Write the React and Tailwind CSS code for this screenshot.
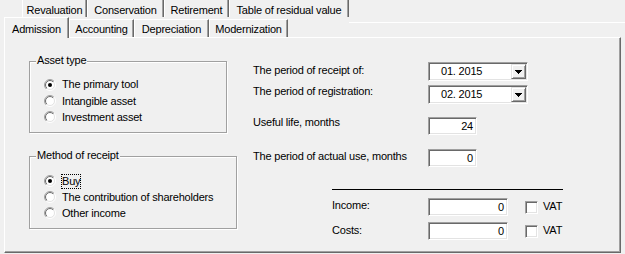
import React from "react";

const sunken =
  "border border-t-[#a0a0a0] border-l-[#a0a0a0] border-b-white border-r-white shadow-[inset_1px_1px_0_#696969,inset_-1px_-1px_0_#e3e3e3] bg-white";

function Radio({ checked }) {
  return (
    <svg width="12" height="12" viewBox="0 0 12 12" className="shrink-0">
      <defs>
        <linearGradient id="rgo" x1="0" y1="0" x2="1" y2="1">
          <stop offset="0.5" stopColor="#a0a0a0" />
          <stop offset="0.5" stopColor="#ffffff" />
        </linearGradient>
        <linearGradient id="rgi" x1="0" y1="0" x2="1" y2="1">
          <stop offset="0.5" stopColor="#696969" />
          <stop offset="0.5" stopColor="#e3e3e3" />
        </linearGradient>
      </defs>
      <circle cx="6" cy="6" r="5.5" fill="none" stroke="url(#rgo)" strokeWidth="1" />
      <circle cx="6" cy="6" r="4.5" fill="#ffffff" stroke="url(#rgi)" strokeWidth="1" />
      {checked && <circle cx="6" cy="6" r="2" fill="#000000" />}
    </svg>
  );
}

function RadioRow({ checked, focus, h, children }) {
  return (
    <div className={`flex items-center ${h}`}>
      <Radio checked={checked} />
      <span
        className={`ml-[5px] border ${
          focus ? "border-dotted border-black" : "border-transparent"
        }`}
      >
        {children}
      </span>
    </div>
  );
}

function Tab1({ w, children }) {
  return (
    <div
      className={`${w} h-[17px] shrink-0 border-l border-r border-l-white border-r-[#696969] shadow-[inset_-1px_0_0_#a0a0a0] text-center pt-[4px] whitespace-nowrap`}
    >
      {children}
    </div>
  );
}

function Tab2({ w, active, children }) {
  if (active) {
    return (
      <div
        className={`${w} h-[21px] shrink-0 relative z-10 bg-[#f0f0f0] border-t border-l border-r border-t-white border-l-white border-r-[#696969] shadow-[inset_-1px_0_0_#a0a0a0] text-center pt-[5px] whitespace-nowrap`}
      >
        {children}
      </div>
    );
  }
  return (
    <div
      className={`${w} h-[18px] mt-[2px] shrink-0 border-t border-l border-r border-t-white border-l-white border-r-[#696969] shadow-[inset_-1px_0_0_#a0a0a0] text-center pt-[3px] whitespace-nowrap`}
    >
      {children}
    </div>
  );
}

function Combo({ value }) {
  return (
    <div className={`w-[100px] h-[19px] ${sunken} flex items-stretch p-[1px]`}>
      <span className="flex-1 pl-[11px] flex items-center">{value}</span>
      <div className="w-[15px] bg-[#f0f0f0] border border-t-[#e3e3e3] border-l-[#e3e3e3] border-b-[#696969] border-r-[#696969] shadow-[inset_1px_1px_0_#ffffff,inset_-1px_-1px_0_#a0a0a0] flex items-center justify-center">
        <svg width="7" height="4" viewBox="0 0 7 4" shapeRendering="crispEdges">
          <rect x="0" y="0" width="7" height="1" fill="#000" />
          <rect x="1" y="1" width="5" height="1" fill="#000" />
          <rect x="2" y="2" width="3" height="1" fill="#000" />
          <rect x="3" y="3" width="1" height="1" fill="#000" />
        </svg>
      </div>
    </div>
  );
}

function Input({ w, value }) {
  return (
    <div className={`${w} h-[18px] shrink-0 ${sunken} flex items-center justify-end pr-[3px]`}>
      {value}
    </div>
  );
}

function Check() {
  return <div className={`w-[13px] h-[13px] shrink-0 ${sunken}`} />;
}

export default function App() {
  return (
    <div className="w-[625px] h-[254px] bg-[#f0f0f0] overflow-hidden text-black text-[11px] leading-[13px] tracking-[-0.2px] font-['Liberation_Sans',Arial,sans-serif]">
      {/* back tab row */}
      <div className="flex h-[17px] pl-[22px]">
        <Tab1 w="w-[65px]">Revaluation</Tab1>
        <Tab1 w="w-[77px]">Conservation</Tab1>
        <Tab1 w="w-[65px]">Retirement</Tab1>
        <Tab1 w="w-[120px]">Table of residual value</Tab1>
        <div className="flex-1 self-start h-[23px] shrink-0 border-b border-white" />
      </div>
      {/* front tab row */}
      <div className="flex h-[20px] pl-[4px] items-start">
        <Tab2 w="w-[65px]" active>
          Admission
        </Tab2>
        <Tab2 w="w-[65px]">Accounting</Tab2>
        <Tab2 w="w-[75px]">Depreciation</Tab2>
        <Tab2 w="w-[79px]">Modernization</Tab2>
      </div>
      {/* panel */}
      <div className="ml-[4px] w-[617px] h-[216px] border border-t-white border-l-white border-r-[#696969] border-b-[#696969] shadow-[inset_-1px_-1px_0_#a0a0a0] flex">
        {/* left column */}
        <div className="ml-[24px] mt-[23px] w-[208px] flex flex-col shrink-0">
          <div className="relative w-[198px] h-[72px] border border-[#a0a0a0] shadow-[1px_1px_0_#ffffff,inset_1px_1px_0_#ffffff] pt-[14px] pl-[14px] flex flex-col">
            <span className="absolute left-[6px] top-[-8px] px-[1px] bg-[#f0f0f0]">Asset type</span>
            <RadioRow h="h-[17px]" checked>
              The primary tool
            </RadioRow>
            <RadioRow h="h-[16px]">Intangible asset</RadioRow>
            <RadioRow h="h-[16px]">Investment asset</RadioRow>
          </div>
          <div className="relative mt-[23px] w-[208px] h-[73px] border border-[#a0a0a0] shadow-[1px_1px_0_#ffffff,inset_1px_1px_0_#ffffff] pt-[16px] pl-[14px] flex flex-col">
            <span className="absolute left-[6px] top-[-8px] px-[1px] bg-[#f0f0f0]">Method of receipt</span>
            <RadioRow h="h-[16px]" checked focus>
              Buy
            </RadioRow>
            <RadioRow h="h-[16px]">The contribution of shareholders</RadioRow>
            <RadioRow h="h-[16px]">Other income</RadioRow>
          </div>
        </div>
        {/* right column */}
        <div className="ml-[16px] mt-[24px] flex flex-col">
          <div className="flex items-start">
            <span className="w-[175px] pt-[2px]">The period of receipt of:</span>
            <Combo value="01. 2015" />
          </div>
          <div className="flex items-start mt-[4px]">
            <span className="w-[175px]">The period of registration:</span>
            <Combo value="02. 2015" />
          </div>
          <div className="flex items-start mt-[13px]">
            <span className="w-[175px] -mt-[1px]">Useful life, months</span>
            <Input w="w-[49px]" value="24" />
          </div>
          <div className="flex items-start mt-[14px]">
            <span className="w-[175px] pt-[1px]">The period of actual use, months</span>
            <Input w="w-[49px]" value="0" />
          </div>
          <div className="mt-[22px] ml-[79px] w-[231px] h-px bg-black" />
          <div className="flex items-start mt-[8px] ml-[79px]">
            <span className="w-[96px] pt-[1px]">Income:</span>
            <Input w="w-[80px]" value="0" />
            <div className="ml-[17px] mt-[3px]">
              <Check />
            </div>
            <span className="ml-[5px] pt-[2px]">VAT</span>
          </div>
          <div className="flex items-start mt-[6px] ml-[79px]">
            <span className="w-[96px] pt-[2px]">Costs:</span>
            <Input w="w-[80px]" value="0" />
            <div className="ml-[17px] mt-[3px]">
              <Check />
            </div>
            <span className="ml-[5px] pt-[2px]">VAT</span>
          </div>
        </div>
      </div>
    </div>
  );
}
